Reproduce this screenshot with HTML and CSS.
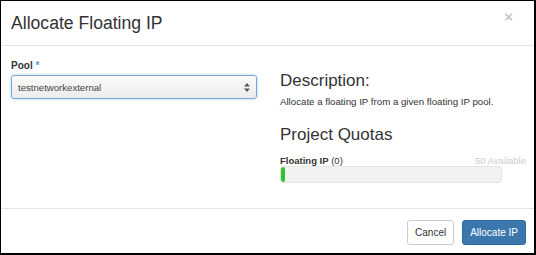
FILE: index.html
```html
<!DOCTYPE html>
<html lang="en">
<head>
    <meta charset="UTF-8">
    <title>Allocate Floating IP</title>
    <link rel="stylesheet" href="styles.css">
</head>
<body>
    <div class="modal">
        <div class="modal-header">
            <h3>Allocate Floating IP</h3>
            <span class="close">&times;</span>
        </div>
        <div class="modal-body">
            <div class="left">
                <label class="field-label">Pool <span class="req">*</span></label>
                <div class="select">
                    <span>testnetworkexternal</span>
                    <svg width="6" height="9" viewBox="0 0 6 9"><path d="M3 0 L6 3.5 H0 Z M3 9 L6 5.5 H0 Z" fill="#555"/></svg>
                </div>
            </div>
            <div class="right">
                <h3 class="desc-title">Description:</h3>
                <p class="desc">Allocate a floating IP from a given floating IP pool.</p>
                <h3 class="quota-title">Project Quotas</h3>
                <div class="quota-row">
                    <span><strong>Floating IP</strong> (0)</span>
                    <span class="avail">50 Available</span>
                </div>
                <div class="progress">
                    <div class="progress-bar" style="width: 2%"></div>
                </div>
            </div>
        </div>
        <div class="modal-footer">
            <button class="btn">Cancel</button>
            <button class="btn btn-primary">Allocate IP</button>
        </div>
    </div>
</body>
</html>
```

FILE: styles.css
```css
body {
    margin: 0;
    font-family: 'Liberation Sans', Arial, sans-serif;
    color: #333;
    background: #000;
}
.modal {
    width: 533px;
    height: 252px;
    margin: 1px 0 0 1px;
    background: #fff;
    display: flex;
    flex-direction: column;
}
.modal-header {
    height: 44px;
    border-bottom: 1px solid #e5e5e5;
    display: flex;
    justify-content: space-between;
    align-items: flex-start;
    padding: 0 21px 0 10px;
}
.modal-header h3 {
    margin: 12px 0 0;
    font-size: 17.6px;
    font-weight: normal;
    line-height: 20px;
}
.close {
    margin-top: 7px;
    font-size: 15px;
    font-weight: bold;
    color: #c8c8c8;
}
.modal-body {
    display: flex;
    height: 162px;
    border-bottom: 1px solid #e5e5e5;
}
.left {
    width: 246px;
    padding: 14px 0 0 10px;
}
.field-label {
    display: block;
    font-size: 10px;
    font-weight: bold;
    line-height: 12px;
    margin-bottom: 3px;
}
.req {
    color: #5a9bd5;
}
.select {
    height: 22px;
    border: 1px solid #7aa9d6;
    border-radius: 3px;
    box-shadow: 0 0 3px rgba(102, 175, 233, 0.6);
    background: linear-gradient(#fbfbfb, #ececec);
    display: flex;
    align-items: center;
    justify-content: space-between;
    padding: 0 6px;
    font-size: 9.6px;
    color: #444;
}
.right {
    padding: 25px 0 0 23px;
    width: 250px;
}
.desc-title, .quota-title {
    margin: 0;
    font-size: 17px;
    font-weight: normal;
    line-height: 20px;
}
.desc {
    margin: 5px 0 17px;
    font-size: 9.7px;
    line-height: 12px;
    white-space: nowrap;
}
.quota-row {
    margin-top: 10px;
    display: flex;
    justify-content: space-between;
    font-size: 9.5px;
    line-height: 12px;
    width: 246px;
}
.avail {
    color: #ccc;
}
.progress {
    margin-top: -1px;
    height: 15px;
    width: 220px;
    background: #f2f2f2;
    border: 1px solid #e4e4e4;
    border-radius: 3px;
    overflow: hidden;
}
.progress-bar {
    height: 100%;
    background: #2fc42f;
    border-radius: 3px;
}
.modal-footer {
    display: flex;
    justify-content: flex-end;
    gap: 8px;
    padding: 11px 8px 0 0;
}
.btn {
    height: 25px;
    padding: 0 7px;
    font-family: 'Liberation Sans', Arial, sans-serif;
    font-size: 10px;
    color: #333;
    background: #fff;
    border: 1px solid #ccc;
    border-radius: 3px;
}
.btn-primary {
    color: #fff;
    background: #3b77ad;
    border-color: #2e6da4;
}
```
